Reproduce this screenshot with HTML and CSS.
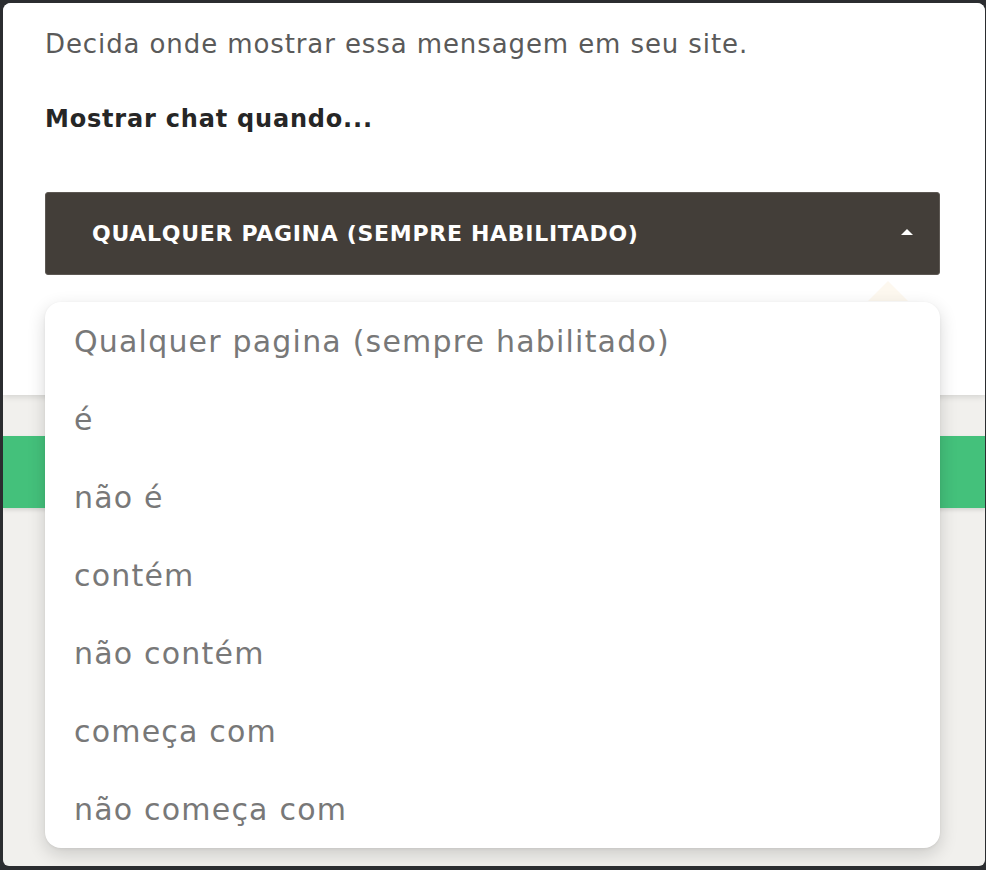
FILE: index.html
```html
<!DOCTYPE html>
<html lang="pt-BR">
<head>
<meta charset="utf-8">
<title>Mostrar chat</title>
<link rel="stylesheet" href="styles.css">
</head>
<body>
<div class="window">
  <section class="modal">
    <p class="intro">Decida onde mostrar essa mensagem em seu site.</p>
    <h3 class="label">Mostrar chat quando...</h3>
    <div class="select">
      <span class="select-text">QUALQUER PAGINA (SEMPRE HABILITADO)</span>
      <span class="select-caret"></span>
    </div>
  </section>
  <div class="green-bar"></div>
  <span class="menu-pointer"></span>
  <ul class="menu">
    <li>Qualquer pagina (sempre habilitado)</li>
    <li>é</li>
    <li>não é</li>
    <li>contém</li>
    <li>não contém</li>
    <li>começa com</li>
    <li>não começa com</li>
  </ul>
</div>
</body>
</html>
```

FILE: styles.css
```css
* { box-sizing: border-box; }
html, body { margin: 0; padding: 0; }
body {
  background: #2b2d30;
  width: 986px;
  height: 870px;
  padding: 3px 1px 4px 3px;
  font-family: "DejaVu Sans", "Open Sans", sans-serif;
}
.window {
  position: relative;
  height: 863px;
  background: #f1f0ed;
  border-radius: 8px 8px 6px 6px;
  overflow: hidden;
}
.modal {
  background: #ffffff;
  height: 392px;
  padding: 26px 42px 0 42px;
  display: flex;
  flex-direction: column;
  box-shadow: 0 2px 6px rgba(0,0,0,0.12);
  position: relative;
  z-index: 1;
}
.intro {
  margin: 0;
  font-size: 26px;
  line-height: 30px;
  letter-spacing: 0.9px;
  color: #5a5a5a;
}
.label {
  margin: 45px 0 0 0;
  font-size: 24px;
  line-height: 30px;
  font-weight: 700;
  letter-spacing: 0.8px;
  color: #262626;
}
.select {
  margin-top: 58px;
  height: 83px;
  width: 895px;
  background: #433e39;
  border: 1px solid #5d5853;
  border-radius: 3px;
  display: flex;
  align-items: center;
  justify-content: space-between;
  padding: 0 26px 0 46px;
}
.select-text {
  color: #ffffff;
  font-weight: 700;
  font-size: 22px;
  letter-spacing: 0.7px;
}
.select-caret {
  width: 0;
  height: 0;
  border-left: 6px solid transparent;
  border-right: 6px solid transparent;
  border-bottom: 6px solid #ffffff;
  margin-top: -4px;
}
.green-bar {
  margin-top: 41px;
  height: 72px;
  background: #44c17b;
  box-shadow: 0 2px 4px rgba(0,0,0,0.12);
}
.menu-pointer {
  position: absolute;
  left: 865px;
  top: 278px;
  width: 0;
  height: 0;
  border-left: 20px solid transparent;
  border-right: 20px solid transparent;
  border-bottom: 20px solid #fdf8ef;
  z-index: 2;
}
.menu {
  position: absolute;
  left: 42px;
  top: 299px;
  width: 895px;
  margin: 0;
  padding: 0;
  list-style: none;
  background: #ffffff;
  border-radius: 16px;
  box-shadow: 0 6px 18px rgba(0,0,0,0.16), 0 1px 3px rgba(0,0,0,0.06);
  z-index: 3;
}
.menu li {
  height: 78px;
  display: flex;
  align-items: center;
  padding-left: 29px;
  font-size: 30px;
  letter-spacing: 1.2px;
  color: #787878;
}
```
